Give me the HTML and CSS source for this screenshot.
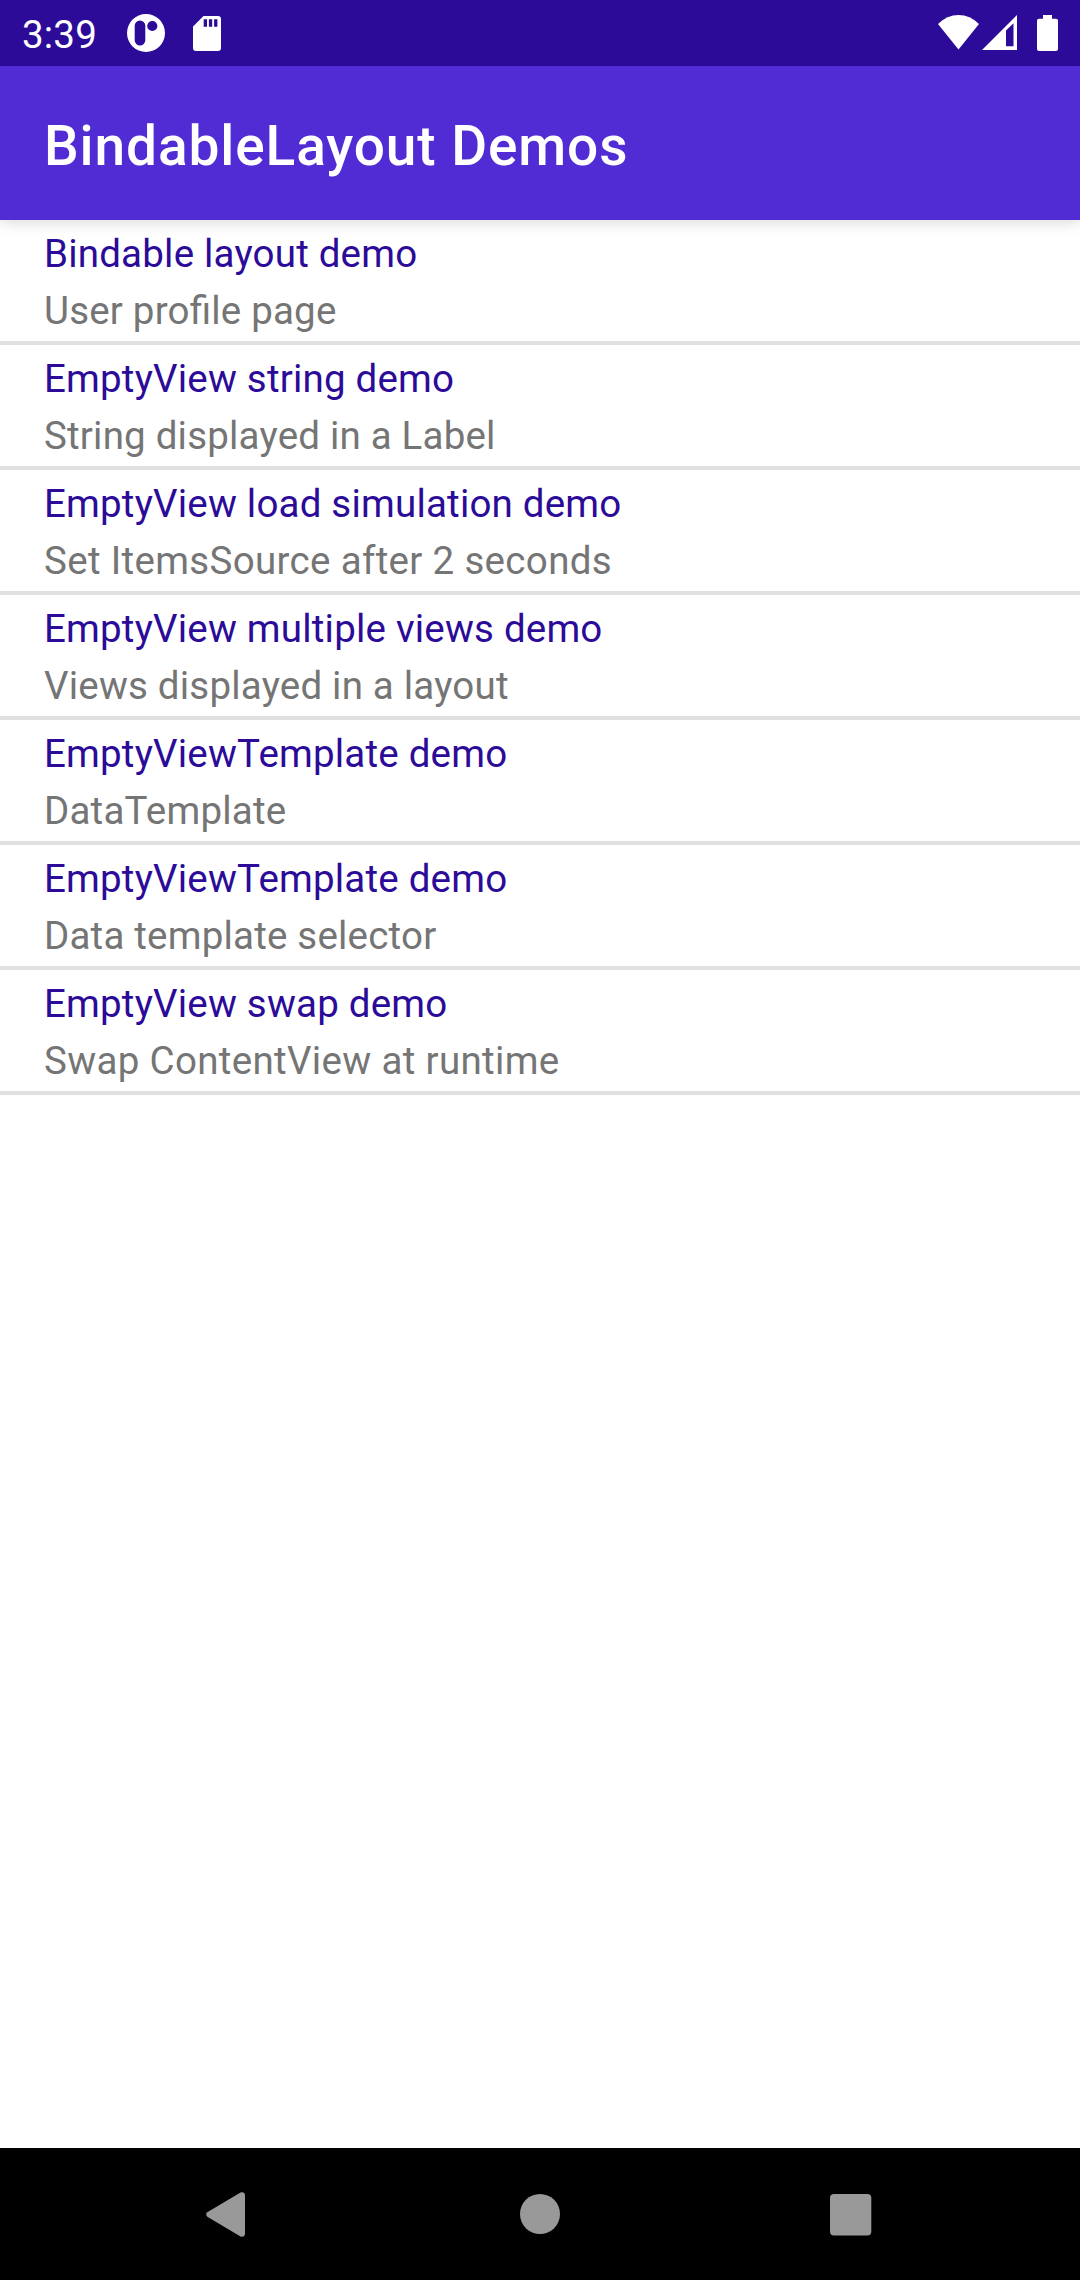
FILE: index.html
```html
<!DOCTYPE html>
<html lang="en">
<head>
<meta charset="utf-8">
<title>BindableLayout Demos</title>
<link rel="stylesheet" href="styles.css">
</head>
<body>
<div class="screen">
  <div class="status-bar">
    <span class="clock">3:39</span>
    <svg class="icon-app" width="38" height="38" viewBox="0 0 38 38">
      <path fill="#fff" fill-rule="evenodd" d="M19 0a19 19 0 1 1 0 38a19 19 0 1 1 0-38zM13 6.5a5.3 5.3 0 0 0-5.3 5.3v14.400a5.300 5.300 0 0 0 10.600 0v-14.400a5.300 5.300 0 0 0-5.300-5.300zM25.300 6.900a5.100 5.100 0 1 0 0 10.200a5.100 5.100 0 1 0 0-10.200z"/>
    </svg>
    <svg class="icon-sd" width="28" height="35" viewBox="0 0 28 35">
      <path fill="#fff" fill-rule="evenodd" d="M10.500 0H25a3 3 0 0 1 3 3V32a3 3 0 0 1-3 3H3a3 3 0 0 1-3-3V10.500zM10.700 3.300v7.400h3.300v-7.400zM15.900 3.300v7.400h3.300v-7.400zM21.100 3.300v7.400h3.300v-7.400z"/>
    </svg>
    <span class="spacer"></span>
    <svg width="42" height="35" viewBox="0 0 42 35">
      <path fill="#fff" d="M0 9Q9 0 20.500 0T41 9L20.500 34.500z"/>
    </svg>
    <svg class="icon-signal" width="35" height="35" viewBox="0 0 35 35">
      <path fill="#fff" fill-rule="evenodd" d="M0 35L35 0V35zM24 15.500V31.300H31.500V8.200z"/>
    </svg>
    <svg class="icon-battery" width="21" height="36" viewBox="0 0 21 36">
      <path fill="#fff" d="M6 0h9v3.700h4a2 2 0 0 1 2 2V34a2 2 0 0 1-2 2H2a2 2 0 0 1-2-2V5.700a2 2 0 0 1 2-2h4z"/>
    </svg>
  </div>
  <header class="app-bar"><h1 class="title">BindableLayout Demos</h1></header>
  <main class="list">
    <div class="row"><div class="name">Bindable layout demo</div><div class="detail">User profile page</div></div>
    <div class="row"><div class="name">EmptyView string demo</div><div class="detail">String displayed in a Label</div></div>
    <div class="row"><div class="name">EmptyView load simulation demo</div><div class="detail loose">Set ItemsSource after 2 seconds</div></div>
    <div class="row"><div class="name">EmptyView multiple views demo</div><div class="detail">Views displayed in a layout</div></div>
    <div class="row"><div class="name">EmptyViewTemplate demo</div><div class="detail">DataTemplate</div></div>
    <div class="row"><div class="name">EmptyViewTemplate demo</div><div class="detail">Data template selector</div></div>
    <div class="row"><div class="name">EmptyView swap demo</div><div class="detail loose">Swap ContentView at runtime</div></div>
  </main>
  <nav class="nav-bar">
    <svg class="nav-back" width="39" height="45" viewBox="0 0 39 45">
      <path fill="#999" d="M1.300 20.300L34.500.500Q38.700-.600 39 3.500V41.500Q38.700 45.600 34.500 44.500L1.300 24.700Q-.900 22.500 1.300 20.300z"/>
    </svg>
    <svg class="nav-home" width="40" height="40" viewBox="0 0 40 40"><circle cx="20" cy="20" r="20" fill="#999"/></svg>
    <svg class="nav-recent" width="42" height="42" viewBox="0 0 42 42"><rect width="41.300" height="41.600" rx="4" fill="#999"/></svg>
  </nav>
</div>
</body>
</html>
```
FILE: styles.css
```css
body {
  margin: 0;
  background: #fff;
  font-family: Roboto, sans-serif;
}
.screen {
  display: flex;
  flex-direction: column;
  width: 1080px;
  height: 2280px;
}
.status-bar {
  display: flex;
  align-items: flex-start;
  box-sizing: border-box;
  height: 66px;
  padding: 15px 22px 0;
  background: #2b0b98;
}
.clock {
  width: 105px;
  margin-top: 1px;
  font-size: 38.5px;
  line-height: 38px;
  letter-spacing: .2px;
  color: #fff;
}
.icon-app { margin-top: -1px; }
.icon-sd { margin: 1px 0 0 28px; }
.spacer { flex: 1; }
.icon-signal { margin-left: 2px; }
.icon-battery { margin-left: 20px; }
.app-bar {
  display: flex;
  align-items: center;
  height: 154px;
  padding-left: 44px;
  background: #512bd4;
  clip-path: inset(0 0 -30px 0);
  box-shadow: 0 2px 14px rgba(0, 0, 0, .16);
}
.title {
  margin: 6px 0 0;
  font-size: 55px;
  font-weight: 500;
  line-height: 64px;
  letter-spacing: .9px;
  color: #fff;
}
.list { flex: 1; }
.row {
  box-sizing: border-box;
  height: 125px;
  padding: 11px 44px 0;
  border-bottom: 4px solid #e0e0e0;
  font-size: 38.5px;
  line-height: 45px;
  letter-spacing: .2px;
  font-feature-settings: "liga" 1;
}
.name { color: #2b0b98; }
.detail { margin-top: 12px; color: #757575; }
.loose { letter-spacing: .33px; }
.nav-bar {
  display: flex;
  align-items: flex-start;
  box-sizing: border-box;
  height: 132px;
  padding: 44px 0 0 206px;
  background: #000;
}
.nav-home { margin: 2px 0 0 275px; }
.nav-recent { margin: 2px 0 0 270px; }
```
